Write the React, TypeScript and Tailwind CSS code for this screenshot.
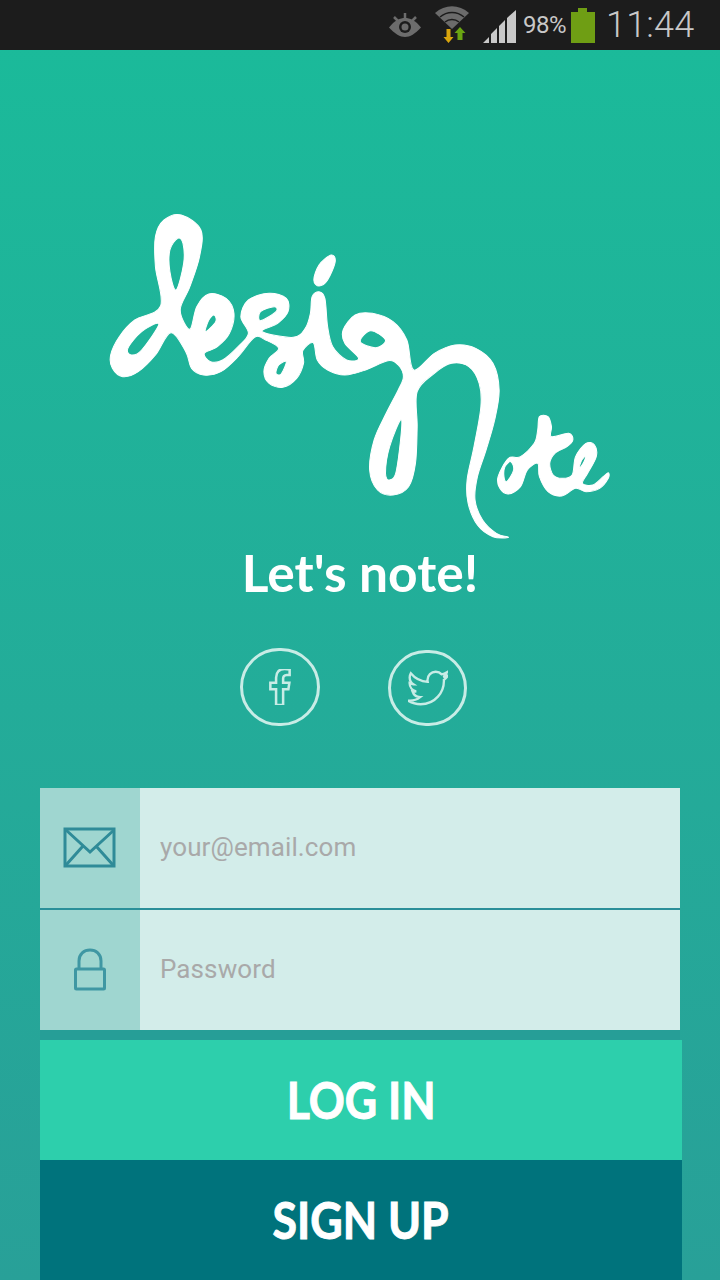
import { FaFacebookF, FaTwitter } from "react-icons/fa";

type Pt = [number, number];

// closed Catmull-Rom through the traced points
function smooth(pts: Pt[]) {
  const n = pts.length;
  let d = `M${pts[0][0]} ${pts[0][1]}`;
  for (let i = 0; i < n; i++) {
    const p0 = pts[(i - 1 + n) % n];
    const p1 = pts[i];
    const p2 = pts[(i + 1) % n];
    const p3 = pts[(i + 2) % n];
    const c1x = p1[0] + (p2[0] - p0[0]) / 6;
    const c1y = p1[1] + (p2[1] - p0[1]) / 6;
    const c2x = p2[0] - (p3[0] - p1[0]) / 6;
    const c2y = p2[1] - (p3[1] - p1[1]) / 6;
    d += `C${c1x} ${c1y} ${c2x} ${c2y} ${p2[0]} ${p2[1]}`;
  }
  return d + "Z";
}

const logoShapes: Pt[][] = [
  // design + N stroke
  [[265,45],[322,90],[318,170],[290,260],[262,330],[290,388],[310,320],[345,282],[395,295],[418,340],[405,400],[370,440],[332,460],[350,485],[385,480],[430,440],[460,400],[438,350],[460,300],[520,280],[570,295],[575,335],[545,370],[500,395],[590,412],[625,385],[640,340],[645,290],[665,275],[682,295],[690,380],[705,440],[745,480],[780,475],[740,430],[735,390],[770,345],[820,340],[880,365],[920,420],[940,510],[1000,460],[1060,435],[1120,445],[1170,490],[1188,570],[1175,660],[1150,750],[1125,830],[1118,900],[1140,960],[1180,1000],[1215,1012],[1170,1010],[1125,975],[1098,910],[1095,840],[1115,740],[1135,620],[1130,550],[1100,500],[1050,490],[1000,520],[950,575],[950,680],[945,790],[925,860],[880,885],[835,870],[812,810],[825,720],[860,640],[895,570],[910,530],[895,495],[865,482],[800,510],[740,525],[690,510],[660,480],[648,428],[618,452],[620,490],[600,535],[560,562],[520,550],[505,515],[520,475],[548,445],[510,420],[478,412],[430,470],[380,515],[330,525],[295,505],[278,455],[235,398],[190,465],[140,515],[95,530],[65,505],[60,465],[85,410],[130,360],[205,318],[190,200],[190,110],[215,60]],
  // ote
  [[1185,830],[1215,775],[1250,770],[1290,730],[1300,690],[1305,650],[1330,650],[1340,680],[1340,710],[1390,700],[1402,720],[1385,740],[1350,760],[1335,790],[1345,825],[1370,835],[1400,825],[1410,770],[1440,730],[1465,735],[1470,770],[1445,820],[1430,850],[1460,855],[1490,830],[1505,818],[1505,835],[1480,865],[1440,875],[1410,865],[1370,888],[1330,875],[1305,830],[1300,790],[1270,810],[1250,860],[1215,882],[1190,865]],
  // i dot
  [[700,165],[712,185],[690,240],[665,258],[650,240],[665,195]],
  // counters
  [[255,115],[270,130],[272,190],[250,270],[232,215],[232,150]],
  [[200,372],[150,395],[110,445],[120,465],[150,450]],
  [[360,345],[365,365],[335,395],[345,360]],
  [[535,320],[540,335],[495,362],[495,335]],
  [[570,485],[555,522],[540,520],[548,495]],
  [[815,392],[858,420],[830,443],[785,425]],
  [[905,660],[890,810],[870,840],[858,820],[870,740]],
  [[1222,785],[1230,810],[1210,845],[1202,830],[1205,800]],
  [[1440,768],[1432,790],[1420,805],[1428,780]],
];

function Logo() {
  return (
    <svg className="block w-[540px] h-[340px] ml-[90px] mt-[150px]" viewBox="0 0 1568 1020" preserveAspectRatio="none">
      <path d={logoShapes.map(smooth).join("")} fill="#fff" fillRule="evenodd" stroke="#fff" strokeWidth="3" />
    </svg>
  );
}

function StatusBar() {
  return (
    <div className="flex h-[50px] shrink-0 items-center bg-[#1c1c1c] pl-[387px] font-['Roboto',sans-serif] text-[#c8c8c8]">
      {/* eye */}
      <svg className="w-[36px] h-[50px]" viewBox="0 0 36 50">
        <path d="M2 27.500C8 20 13 18 18 18s10 2 16 9.500C28 34 23 37 18 37S8 34 2 27.500Z" fill="#6c6c6c" />
        <circle cx="18" cy="27" r="6" fill="#1c1c1c" />
        <circle cx="18" cy="27" r="3.500" fill="#6c6c6c" />
        <path d="M18 13v6M7 17l4 4M29 17l-4 4" stroke="#6c6c6c" strokeWidth="2.500" />
      </svg>
      {/* wifi with arrows */}
      <svg className="ml-[11px] w-[37px] h-[50px]" viewBox="0 0 37 50">
        <path d="M1 13C11 4 25 4 35 13l-17 16Z" fill="#6b6b6b" />
        <path d="M6 17C13 11 23 11 30 17M11 22C15 18.500 21 18.500 25 22" stroke="#1c1c1c" strokeWidth="1.500" fill="none" />
        <path d="M12.500 29h4v8h3l-5 6-5-6h3Z" fill="#d9a50d" />
        <path d="M23.500 40v-7h-3l5.500-6 5.500 6h-3v7Z" fill="#6aa512" />
      </svg>
      {/* signal */}
      <svg className="ml-[12px] w-[34px] h-[50px]" viewBox="0 0 34 50">
        <path d="M0 43l6-6v6ZM8 43v-9l6-6v15ZM16 43V26l6-6v23ZM24 43V18l9-8v33Z" fill="#c8c8c8" />
      </svg>
      <span className="ml-[6px] text-[24px] leading-[50px] tracking-[-0.5px] w-[44px]">98%</span>
      {/* battery */}
      <svg className="ml-[4px] w-[24px] h-[50px]" viewBox="0 0 24 50">
        <path d="M0 12h7V8h9v4h8v31H0Z" fill="#6f9e14" />
      </svg>
      <span className="ml-[11px] text-[36px] font-light leading-[50px] tracking-[0.2px]">11:44</span>
    </div>
  );
}

function Social() {
  return (
    <div className="mt-[40px] flex h-[78px] items-end pl-[240px]">
      <div className="flex h-[78px] w-[80px] items-center justify-center rounded-full border-[3px] border-[#c8ece6] text-[#c8ece6]">
        <FaFacebookF size={36} fill="none" stroke="currentColor" strokeWidth={36} />
      </div>
      <div className="ml-[68px] flex h-[76px] w-[79px] items-center justify-center rounded-full border-[3px] border-[#c8ece6] text-[#c8ece6]">
        <FaTwitter size={40} fill="none" stroke="currentColor" strokeWidth={30} />
      </div>
    </div>
  );
}

function Field({ icon, placeholder, type }: { icon: React.ReactNode; placeholder: string; type: string }) {
  return (
    <div className="flex h-[120px]">
      <div className="flex w-[100px] items-center justify-center bg-[#9fd6d0]">{icon}</div>
      <input
        type={type}
        placeholder={placeholder}
        className="min-w-0 flex-1 bg-[#d3edea] pb-[2px] pl-[20px] font-['Roboto',sans-serif] text-[26px] tracking-[0.1px] outline-none placeholder:text-[#a9a9a9]"
      />
    </div>
  );
}

export default function App() {
  return (
    <div className="flex h-[1280px] w-[720px] flex-col overflow-hidden bg-gradient-to-b from-[#1abb9a] to-[#28a098]">
      <StatusBar />
      <Logo />
      <h1 className="h-[68px] text-center font-['Lato',sans-serif] text-[51.5px] font-bold leading-[64px] text-white">
        Let's note!
      </h1>
      <Social />

      <form className="mx-[40px] mt-[62px] flex flex-col bg-[#269e97] pb-[10px]">
        <Field
          type="email"
          placeholder="your@email.com"
          icon={
            <svg className="w-[54px] h-[42px]" viewBox="0 0 54 42" fill="none" stroke="#2f8b98" strokeWidth="3">
              <rect x="2" y="2" width="49" height="37" />
              <path d="M3 3l24 22L51 3M3 38l17-19M50 38L33 19" />
            </svg>
          }
        />
        <div className="h-[2px] bg-[#2a8f99]" />
        <Field
          type="password"
          placeholder="Password"
          icon={
            <svg className="w-[34px] h-[44px]" viewBox="0 0 34 44" fill="none" stroke="#3f97a3" strokeWidth="3">
              <rect x="2.500" y="21" width="29" height="20" rx="1" />
              <path d="M6 21v-8C6 6 11 2 17 2s11 4 11 11v8" />
            </svg>
          }
        />
      </form>

      <div className="flex w-[642px] ml-[40px] flex-col font-['Lato',sans-serif] text-[51px] font-bold text-white [-webkit-text-stroke:1px_#fff]">
        <button className="h-[120px] bg-[#2dcfac]">
          <span className="inline-block scale-x-[0.875]">LOG IN</span>
        </button>
        <button className="h-[120px] bg-[#00737c]">
          <span className="inline-block scale-x-[0.875]">SIGN UP</span>
        </button>
      </div>
    </div>
  );
}
